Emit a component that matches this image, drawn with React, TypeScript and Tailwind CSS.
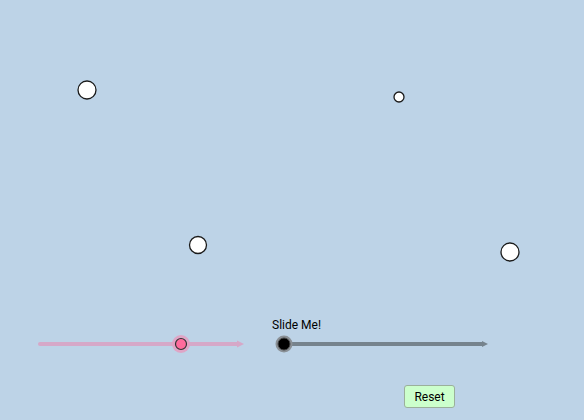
import React from "react";

const points = [
  { x: 87, y: 90, r: 9 },
  { x: 399, y: 97, r: 5 },
  { x: 198, y: 245, r: 8.5 },
  { x: 510, y: 252, r: 9 },
];

export default function App() {
  return (
    <div className="relative h-[420px] w-[584px] overflow-hidden bg-[#bdd3e7] font-['Roboto',sans-serif]">
      <svg className="absolute inset-0" width={584} height={420}>
        {points.map((p) => (
          <circle key={p.x} cx={p.x} cy={p.y} r={p.r} fill="#ffffff" stroke="#1a1a1a" strokeWidth={1.3} />
        ))}

        {/* pink slider */}
        <line x1={40} y1={344} x2={238} y2={344} stroke="#d6a8c8" strokeWidth={4} strokeLinecap="round" />
        <polygon points="237,340.5 244,344 237,347.5" fill="#d6a8c8" />
        <circle cx={181} cy={344} r={9} fill="#e2a0c2" opacity={0.9} />
        <circle cx={181} cy={344} r={5.5} fill="#ff6b9c" stroke="#333" strokeWidth={1.2} />

        {/* gray slider */}
        <line x1={284} y1={344} x2={482} y2={344} stroke="#76838d" strokeWidth={4} />
        <polygon points="482,341 488,344 482,347" fill="#76838d" />
        <circle cx={284} cy={344} r={8.5} fill="#8a9096" />
        <circle cx={284} cy={344} r={6} fill="#000" stroke="#444" strokeWidth={1} />
      </svg>

      <div className="absolute left-[272px] top-[316px] text-[12px] text-black">Slide Me!</div>

      <button className="absolute left-[404px] top-[385px] h-[23px] w-[51px] rounded-[3px] border border-[#9bb09b] bg-[#ccffcc] text-[12px] text-black">
        Reset
      </button>
    </div>
  );
}
